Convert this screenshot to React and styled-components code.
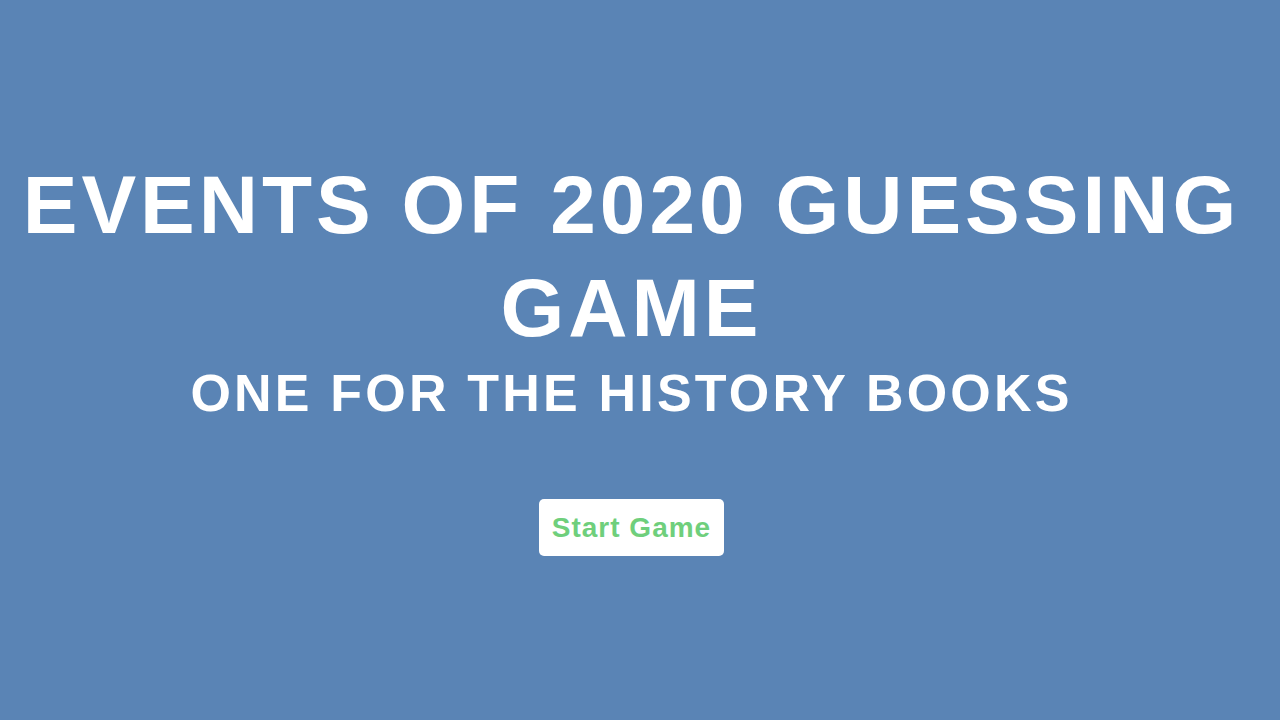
import React from 'react';
import styled, { createGlobalStyle } from 'styled-components';

const GlobalStyle = createGlobalStyle`
  html, body {
    margin: 0;
    padding: 0;
    background-color: #5a84b5;
  }
  body {
    font-family: "Liberation Sans", Arial, sans-serif;
  }
`;

const Page = styled.div`
  min-height: 720px;
  display: flex;
  flex-direction: column;
  align-items: center;
  padding: 153px 17px 0 0;
  box-sizing: border-box;
  color: #ffffff;
  text-align: center;
`;

const Title = styled.h1`
  margin: 0;
  font-size: 82px;
  line-height: 103px;
  font-weight: 700;
  letter-spacing: 4px;
  max-width: 1250px;
  text-transform: uppercase;
`;

const Subtitle = styled.h2`
  margin: 2px 0 0;
  font-size: 52px;
  line-height: 65px;
  font-weight: 700;
  letter-spacing: 3.2px;
  text-transform: uppercase;
`;

const StartButton = styled.button`
  margin-top: 73px;
  height: 57px;
  padding: 0 13px;
  border: none;
  border-radius: 5px;
  background: #ffffff;
  color: #6fcf7c;
  font-family: "Liberation Sans", Arial, sans-serif;
  font-size: 28px;
  font-weight: 700;
  letter-spacing: 1px;
  cursor: pointer;
`;

const App = () => {
  return (
    <>
      <GlobalStyle />
      <Page>
        <Title>Events of 2020 Guessing Game</Title>
        <Subtitle>One for the history books</Subtitle>
        <StartButton>Start Game</StartButton>
      </Page>
    </>
  );
};

export default App;
